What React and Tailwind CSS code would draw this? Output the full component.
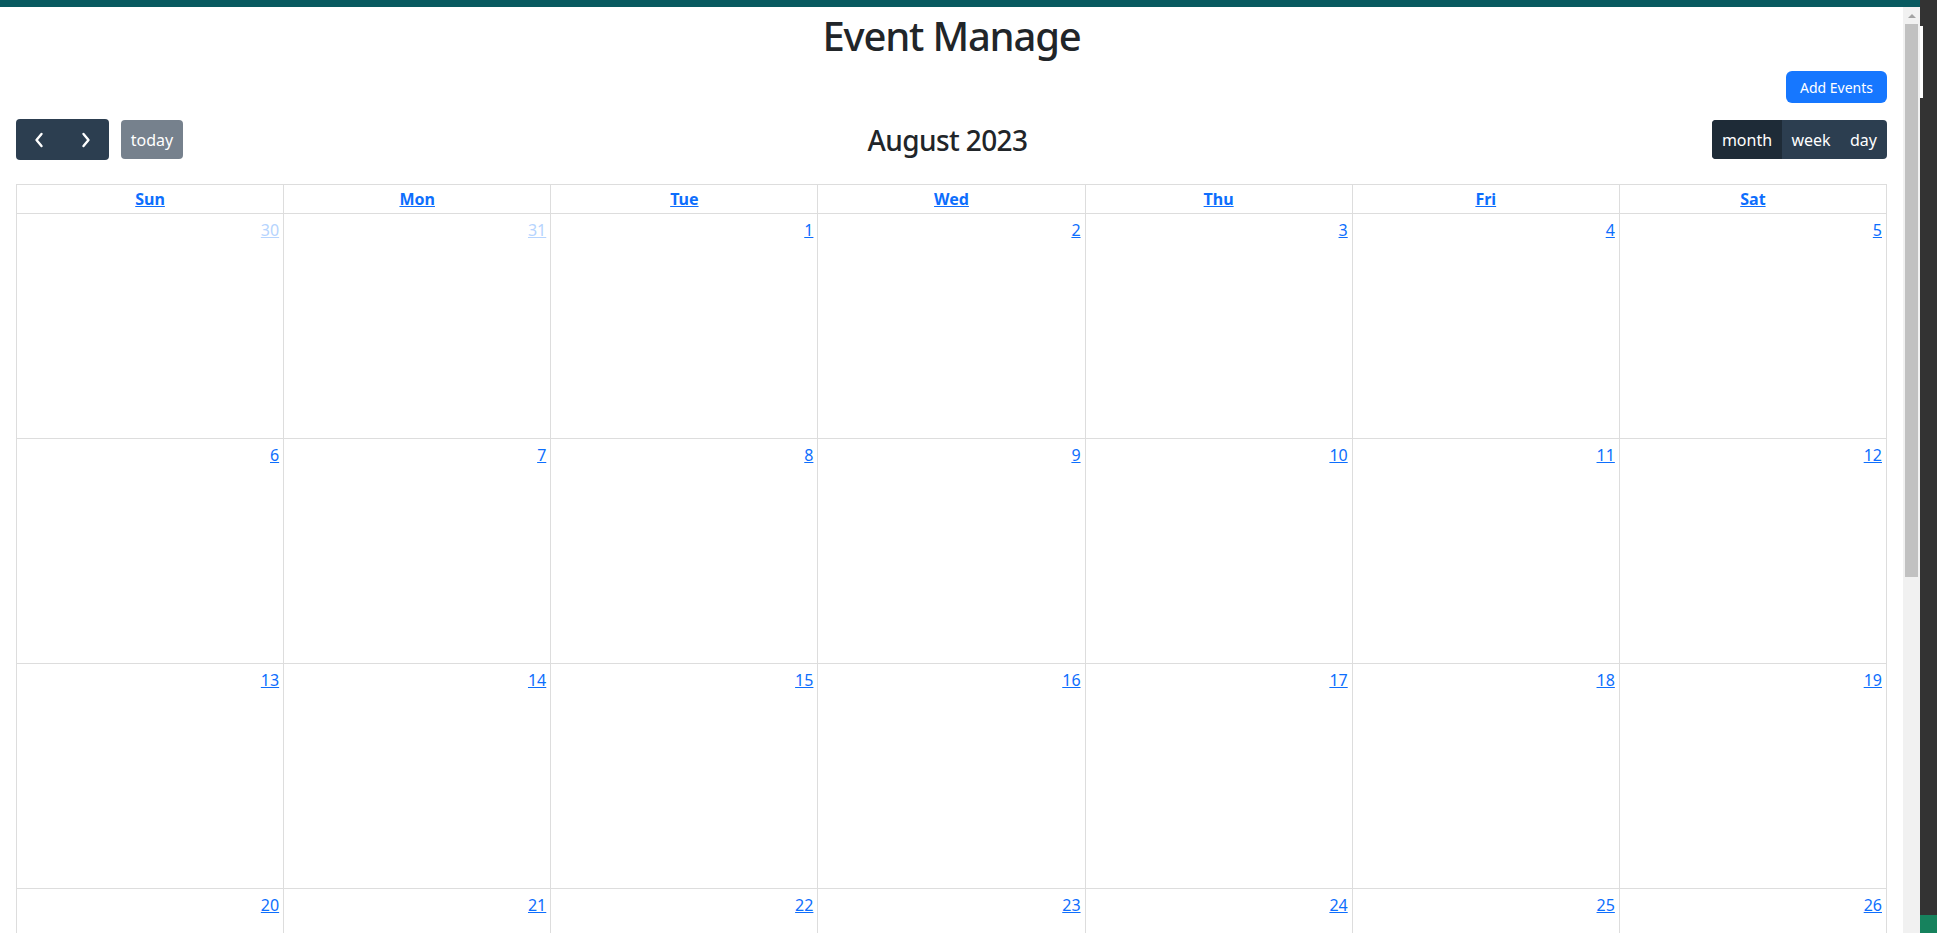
import React from 'react';

const days = ['Sun', 'Mon', 'Tue', 'Wed', 'Thu', 'Fri', 'Sat'];

// august 2023, starting from the sunday before the 1st
const weeks = [
  [30, 31, 1, 2, 3, 4, 5],
  [6, 7, 8, 9, 10, 11, 12],
  [13, 14, 15, 16, 17, 18, 19],
  [20, 21, 22, 23, 24, 25, 26],
  [27, 28, 29, 30, 31, 1, 2],
];

const Chevron = ({ dir }) => (
  <svg width="12" height="16" viewBox="0 0 12 16" fill="none">
    <polyline
      points={dir === 'left' ? '8.5,2 3.5,8 8.5,14' : '3.5,2 8.5,8 3.5,14'}
      stroke="white" strokeWidth="2.4" strokeLinecap="round" strokeLinejoin="round"
    />
  </svg>
);

const Calendar = () => (
  <div>
    {/* Toolbar */}
    <div className="flex items-center justify-between h-[41px]">
      <div className="flex items-center gap-3">
        <div className="flex h-[41px] rounded-[4px] overflow-hidden bg-[#2c3e50]">
          <button className="w-[46.5px] flex items-center justify-center"><Chevron dir="left"/></button>
          <button className="w-[46.5px] flex items-center justify-center"><Chevron dir="right"/></button>
        </div>
        <button className="h-[39px] w-[62px] rounded-[4px] bg-[#76818d] text-white text-[16px]">today</button>
      </div>
      <h2 className="text-[28px] font-medium text-[#212529] leading-[1.2] tracking-[-0.6px] pt-[2px]">August 2023</h2>
      <div className="flex h-[39px] rounded-[4px] overflow-hidden bg-[#2c3e50] text-white text-[16px]">
        <button className="w-[70px] bg-[#1e2b37]">month</button>
        <button className="w-[58px]">week</button>
        <button className="w-[47px]">day</button>
      </div>
    </div>

    {/* Month grid */}
    <div className="mt-[24px] border-l border-t border-[#dddddd]">
      <div className="grid grid-cols-7">
        {days.map(d => (
          <div key={d} className="h-[29px] border-r border-b border-[#dddddd] flex items-center justify-center">
            <a className="text-[16px] font-bold text-[#0d6efd] underline leading-[24px]">{d}</a>
          </div>
        ))}
      </div>
      {weeks.map((w, wi) => (
        <div key={wi} className="grid grid-cols-7">
          {w.map((n, di) => {
            const other = (wi === 0 && n > 20) || (wi === 4 && n < 10);
            return (
              <div key={di} className="h-[225px] border-r border-b border-[#dddddd] flex justify-end p-[4px]">
                <a className={`text-[16px] leading-[24px] underline h-[24px] ${other ? 'text-[#b6d4fe]' : 'text-[#0d6efd]'}`}>{n}</a>
              </div>
            );
          })}
        </div>
      ))}
    </div>
  </div>
);

export default function App() {
  return (
    <div className="w-[1937px] h-[933px] overflow-hidden flex bg-white font-['Segoe_UI','Noto_Sans',sans-serif]">
      <div className="w-[1920px] flex flex-col">
        <div className="h-[7px] bg-[#085a60] shrink-0"/>
        <div className="flex flex-1 min-h-0">
          <main className="w-[1903px] px-4 overflow-hidden">
            <h1 className="h-[52px] pt-[3px] text-[40px] font-medium leading-[52px] text-center text-[#212529] tracking-[-1.2px]">Event Manage</h1>
            <div className="flex justify-end mt-[12px] mb-[16px]">
              <button className="h-[32px] w-[101px] rounded-[6px] bg-[#1677ff] text-white text-[14px]">Add Events</button>
            </div>
            <Calendar/>
          </main>

          {/* Scrollbar */}
          <div className="w-[17px] bg-[#f1f1f1] flex flex-col items-center">
            <div className="h-[17px] flex items-center justify-center">
              <div className="w-0 h-0 border-l-[4px] border-r-[4px] border-b-[4px] border-l-transparent border-r-transparent border-b-[#a3a3a3]"/>
            </div>
            <div className="w-[13px] h-[553px] bg-[#c1c1c1]"/>
          </div>
        </div>
      </div>

      {/* Side strip */}
      <div className="w-[17px] bg-[#333333] flex flex-col">
        <div className="h-[26px]"/>
        <div className="w-[3px] h-[72px] bg-white"/>
        <div className="flex-1"/>
        <div className="h-[18px] bg-[#16825d]"/>
      </div>
    </div>
  );
}
